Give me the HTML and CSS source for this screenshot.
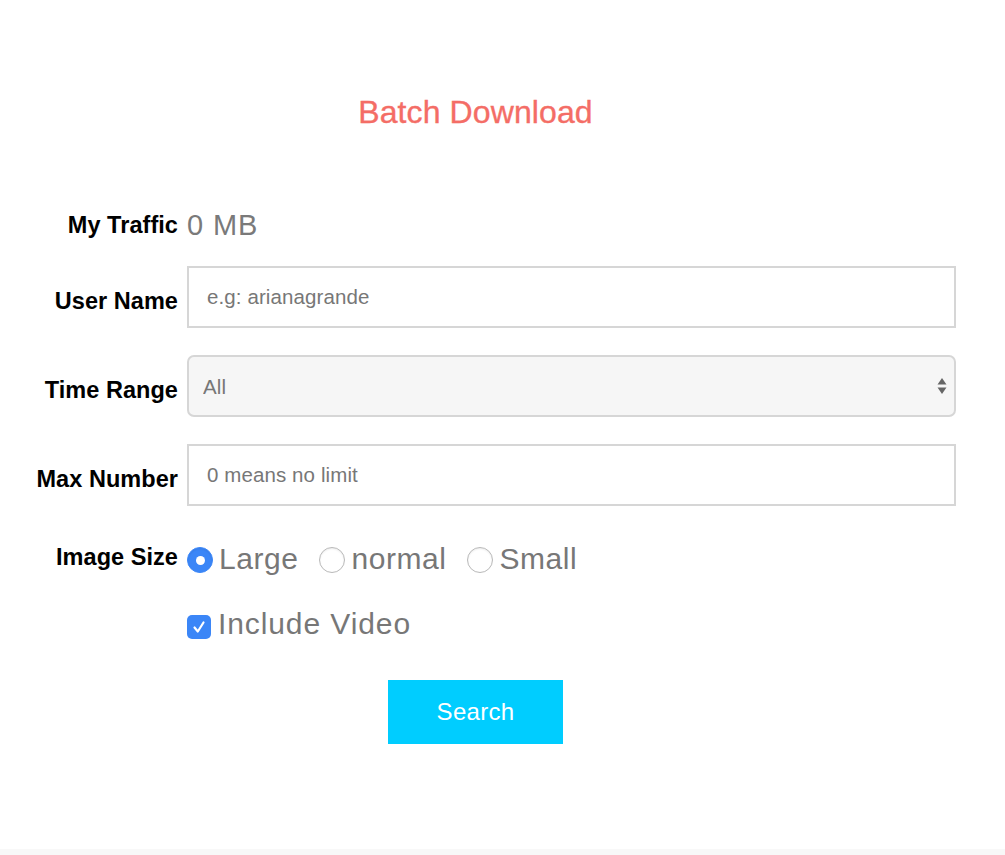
FILE: index.html
```html
<!DOCTYPE html>
<html lang="en">
<head>
    <meta charset="UTF-8">
    <title>Batch Download</title>
    <link rel="stylesheet" href="styles.css">
</head>
<body>
    <div class="page">
        <h1 class="title">Batch Download</h1>

        <div class="row row-traffic">
            <div class="label">My Traffic</div>
            <div class="traffic">0 MB</div>
        </div>

        <div class="row row-field">
            <div class="label">User Name</div>
            <input class="field" type="text" placeholder="e.g: arianagrande">
        </div>

        <div class="row row-field">
            <div class="label">Time Range</div>
            <div class="select-wrap">
                <select class="field select">
                    <option>All</option>
                </select>
                <svg class="select-arrows" width="10" height="18" viewBox="0 0 10 18">
                    <path d="M5 1 L9.5 7.5 L0.5 7.5 Z" fill="#666"/>
                    <path d="M5 17 L9.5 10.5 L0.5 10.5 Z" fill="#666"/>
                </svg>
            </div>
        </div>

        <div class="row row-field">
            <div class="label">Max Number</div>
            <input class="field" type="text" placeholder="0 means no limit">
        </div>

        <div class="row row-size">
            <div class="label">Image Size</div>
            <div class="options">
                <label class="option">
                    <span class="radio checked"></span>Large
                </label>
                <label class="option">
                    <span class="radio"></span>normal
                </label>
                <label class="option">
                    <span class="radio"></span>Small
                </label>
            </div>
        </div>

        <div class="row row-video">
            <div class="label"></div>
            <label class="option">
                <span class="checkbox">
                    <svg width="18" height="18" viewBox="0 0 18 18">
                        <path d="M4.5 9.5 L7.8 13.5 L13.5 4.5" fill="none" stroke="#fff" stroke-width="2.2" stroke-linecap="round" stroke-linejoin="round"/>
                    </svg>
                </span>Include Video
            </label>
        </div>

        <div class="actions">
            <button class="btn-search">Search</button>
        </div>
    </div>
</body>
</html>
```

FILE: styles.css
```css
* {
    margin: 0;
    padding: 0;
    box-sizing: border-box;
}

body {
    font-family: 'Liberation Sans', Arial, sans-serif;
    background: #f8f8f8;
    color: #000;
}

.page {
    width: 100%;
    height: 849px;
    background: #fff;
    padding-top: 93px;
}

.title {
    width: 951px;
    text-align: center;
    font-size: 32px;
    line-height: 38px;
    font-weight: normal;
    color: #f46d66;
    -webkit-text-stroke: 0.35px #f46d66;
    letter-spacing: 0.1px;
}

.row {
    display: flex;
    align-items: center;
    width: 956px;
}

.label {
    width: 178px;
    flex-shrink: 0;
    margin-right: 9px;
    text-align: right;
    font-size: 23.5px;
    font-weight: bold;
    letter-spacing: 0.05px;
}

.row-traffic {
    margin-top: 74px;
    height: 40px;
}

.traffic {
    font-size: 29px;
    letter-spacing: 0.9px;
    color: #7a7a7a;
}

.row-field {
    margin-top: 27px;
}

.row-traffic + .row-field {
    margin-top: 21px;
}

.row-field .label {
    padding-top: 9px;
}

.field {
    width: 769px;
    height: 62px;
    border: 2px solid #d6d6d6;
    background: #fff;
    padding: 0 18px;
    font-family: inherit;
    font-size: 20.5px;
    letter-spacing: 0.1px;
    color: #333;
    outline: none;
}

.field::placeholder {
    color: #777;
}

.select-wrap {
    position: relative;
}

.select {
    appearance: none;
    -webkit-appearance: none;
    background: #f6f6f6;
    border-radius: 7px;
    padding-left: 14px;
    color: #777;
}

.select-arrows {
    position: absolute;
    right: 9px;
    top: 22px;
}

.row-size {
    margin-top: 39px;
    height: 30px;
}

.row-size .label {
    margin-top: -6px;
}

.options {
    display: flex;
    align-items: center;
    gap: 21px;
}

.option {
    display: flex;
    align-items: center;
    font-size: 30px;
    letter-spacing: 0.55px;
    color: #777;
    line-height: 30px;
    padding-bottom: 3px;
}

.radio {
    width: 26px;
    height: 26px;
    border-radius: 50%;
    border: 1px solid #b9b9b9;
    background: #fff;
    margin-right: 6px;
    margin-top: 3px;
    box-shadow: inset 0 1px 2px rgba(0,0,0,0.08);
    display: flex;
    align-items: center;
    justify-content: center;
}

.radio.checked {
    background: #3b86f7;
    border-color: #3b86f7;
}

.radio.checked::after {
    content: '';
    width: 9px;
    height: 9px;
    border-radius: 50%;
    background: #fff;
}

.row-video {
    margin-top: 35px;
    height: 30px;
}

.row-video .option {
    letter-spacing: 0.9px;
}

.checkbox {
    width: 24px;
    height: 24px;
    border-radius: 5px;
    background: #3b86f7;
    margin-right: 7px;
    display: flex;
    align-items: center;
    justify-content: center;
    margin-top: 6px;
}

.actions {
    width: 951px;
    display: flex;
    justify-content: center;
    margin-top: 40px;
}

.btn-search {
    width: 175px;
    height: 64px;
    border: none;
    background: #00cdff;
    color: #fff;
    font-family: inherit;
    font-size: 24px;
    letter-spacing: 0.3px;
}
```
